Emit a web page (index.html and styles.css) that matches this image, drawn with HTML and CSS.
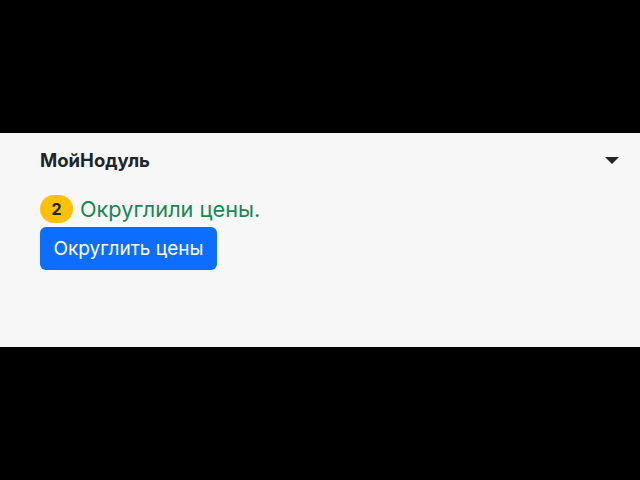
FILE: index.html
```html
<!DOCTYPE html>
<html lang="ru">
<head>
<meta charset="utf-8">
<link rel="stylesheet" href="styles.css">
</head>
<body>
<div class="panel">
  <div class="header">
    <span class="title">МойНодуль</span>
    <span class="caret"></span>
  </div>
  <div class="status">
    <span class="badge">2</span>
    <span class="message">Округлили цены.</span>
  </div>
  <button class="btn">Округлить цены</button>
</div>
</body>
</html>
```
FILE: styles.css
```css
html, body {
  margin: 0;
  padding: 0;
  background: #000;
  width: 640px;
  height: 480px;
  overflow: hidden;
  font-family: Inter, "Liberation Sans", Arial, sans-serif;
}
.panel {
  margin-top: 133px;
  height: 214px;
  box-sizing: border-box;
  background: #f7f7f7;
  padding: 16px 21px 0 40px;
  display: flex;
  flex-direction: column;
  align-items: flex-start;
}
.header {
  align-self: stretch;
  display: flex;
  justify-content: space-between;
  align-items: center;
  height: 22px;
}
.title {
  font-size: 18.5px;
  font-weight: 700;
  color: #212529;
}
.caret {
  width: 0;
  height: 0;
  border-left: 7px solid transparent;
  border-right: 7px solid transparent;
  border-top: 7px solid #212529;
}
.status {
  margin-top: 23px;
  display: flex;
  align-items: center;
  gap: 7px;
  height: 29px;
}
.badge {
  display: inline-flex;
  align-items: center;
  justify-content: center;
  width: 33px;
  height: 28px;
  border-radius: 14px;
  background: #ffc107;
  color: #212529;
  font-size: 16px;
  font-weight: 700;
}
.message {
  font-size: 21.7px;
  color: #198754;
}
.btn {
  margin-top: 4px;
  height: 43px;
  padding: 0 13.5px;
  border: none;
  border-radius: 6px;
  background: #0d6efd;
  color: #fff;
  font-family: Inter, "Liberation Sans", Arial, sans-serif;
  font-size: 19px;
}
```
